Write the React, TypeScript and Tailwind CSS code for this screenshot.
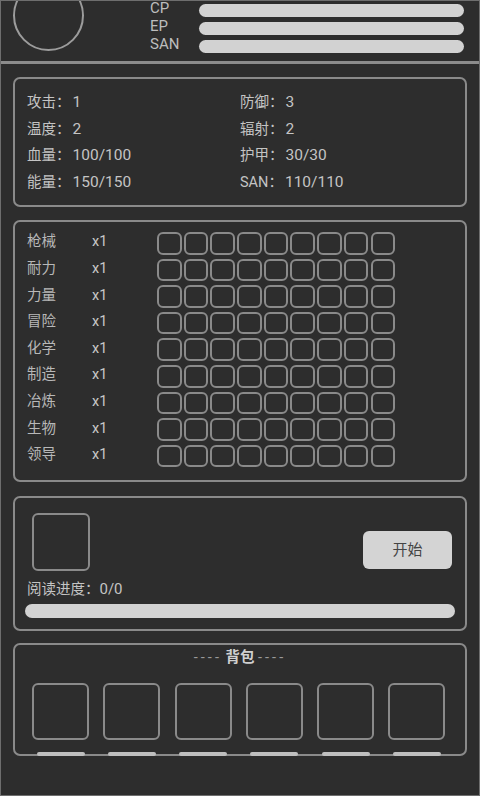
import React from 'react';

const stats: [string, string][] = [
  ['攻击：', '1'],
  ['防御：', '3'],
  ['温度：', '2'],
  ['辐射：', '2'],
  ['血量：', '100/100'],
  ['护甲：', '30/30'],
  ['能量：', '150/150'],
  ['SAN：', '110/110'],
];

const skills = ['枪械', '耐力', '力量', '冒险', '化学', '制造', '冶炼', '生物', '领导'];

const bars = ['CP', 'EP', 'SAN'];

function Panel({ className, children }: { className?: string; children: React.ReactNode }) {
  return (
    <div className={'mx-[12px] rounded-[7px] border-2 border-[#8a8a8a] ' + (className ?? '')}>{children}</div>
  );
}

export default function App() {
  return (
    <div className="w-[480px] h-[796px] overflow-hidden border border-[#6e6e6e] bg-[#2d2d2d] text-[#c4c4c4] font-['Roboto','Noto_Sans_CJK_SC',sans-serif]">
      {/* header */}
      <div className="h-[60px] flex overflow-hidden">
        <div className="ml-[12px] -mt-[21px] w-[71px] h-[71px] shrink-0 rounded-full border-2 border-[#9c9c9c]" />
        <div className="ml-[66px] flex flex-col">
          {bars.map((b) => (
            <div key={b} className="h-[18px] flex items-center">
              <span className="w-[49px] text-[15px] leading-none -mt-[3px] text-[#bdbdbd]">{b}</span>
              <div className="w-[265px] h-[13px] rounded-full bg-[#d2d2d2]" />
            </div>
          ))}
        </div>
      </div>
      <div className="h-[3px] bg-[#8c8c8c]" />

      {/* stats */}
      <Panel className="mt-[13px] pt-[10px] pb-[10px] pl-[12px]">
        <div className="grid grid-cols-[213px_1fr]">
          {stats.map(([k, v]) => (
            <div key={k} className="h-[26.5px] leading-[26.5px] text-[14.5px] whitespace-pre">
              {k}
              <span className="ml-[2px] text-[15.5px]">{v}</span>
            </div>
          ))}
        </div>
      </Panel>

      {/* skills */}
      <Panel className="mt-[13px] pt-[8px] pb-[11px] pl-[12px]">
        {skills.map((s) => (
          <div key={s} className="h-[26.6px] flex items-center text-[14.5px]">
            <span className="w-[65px] -mt-[2px] text-[#b8b8b8]">{s}</span>
            <span className="w-[65px] -mt-[2px] text-[#c8c8c8]">x1</span>
            <div className="flex gap-[2.2px]">
              {Array.from({ length: 9 }).map((_, i) => (
                <div key={i} className="w-[24.5px] h-[22.5px] rounded-[6px] border-2 border-[#8a8a8a]" />
              ))}
            </div>
          </div>
        ))}
      </Panel>

      {/* reading */}
      <Panel className="mt-[14px] pt-[15px] pb-[11px]">
        <div className="flex items-end justify-between">
          <div className="ml-[17px] w-[58px] h-[58px] rounded-[6px] border-2 border-[#8a8a8a]" />
          <button className="mr-[13px] mb-[2px] w-[89px] h-[38px] rounded-[6px] bg-[#d4d4d4] text-[#444] text-[15px]">
            开始
          </button>
        </div>
        <div className="mt-[8px] ml-[12px] h-[20px] leading-[20px] text-[14.5px]">
          阅读进度：<span className="text-[15px]">0/0</span>
        </div>
        <div className="mt-[5px] mx-[10px] h-[14px] rounded-full bg-[#d2d2d2]" />
      </Panel>

      {/* backpack */}
      <Panel className="mt-[12px] pt-[3px]">
        <div className="h-[20px] leading-[20px] text-center text-[14.5px] whitespace-pre">
          <span className="text-[#9a9a9a] tracking-[3px]">----</span>
          <span className="font-bold text-[#d0d0d0]"> 背包 </span>
          <span className="text-[#9a9a9a] tracking-[3px]">----</span>
        </div>
        <div className="mt-[15px] ml-[17px] flex gap-[14.3px]">
          {Array.from({ length: 6 }).map((_, i) => (
            <div key={i} className="flex flex-col items-center">
              <div className="w-[57px] h-[57px] rounded-[6px] border-2 border-[#8a8a8a]" />
              <div className="mt-[12px] -mb-[2px] w-[48px] h-[4px] rounded-full bg-[#bfbfbf] relative" />
            </div>
          ))}
        </div>
      </Panel>
    </div>
  );
}
